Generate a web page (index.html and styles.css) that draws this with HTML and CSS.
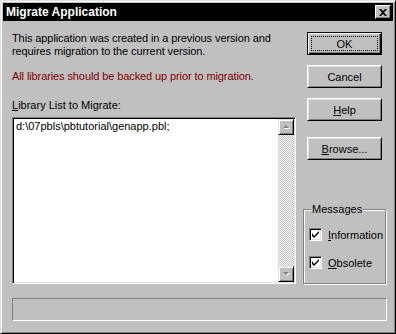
FILE: index.html
```html
<!DOCTYPE html>
<html lang="en">
<head>
  <meta charset="UTF-8">
  <title>Migrate Application</title>
  <link rel="stylesheet" href="styles.css">
</head>
<body>
  <div class="window">
    <div class="titlebar">
      <span class="title">Migrate Application</span>
      <button class="close-btn" aria-label="Close">
        <svg width="8" height="7" viewBox="0 0 8 7"><path d="M0 0h2l2 2 2-2h2L5 3.5 8 7H6L4 5 2 7H0l3-3.5z" fill="#000"/></svg>
      </button>
    </div>

    <div class="main">
      <div class="left">
        <p class="intro">This application was created in a previous version and<br>requires migration to the current version.</p>
        <p class="warning">All libraries should be backed up prior to migration.</p>
        <label class="list-label"><u>L</u>ibrary List to Migrate:</label>
        <div class="listbox">
          <div class="list-items">
            <div class="item">d:\07pbls\pbtutorial\genapp.pbl;</div>
          </div>
          <div class="scrollbar">
            <div class="scroll-btn">
              <svg width="9" height="6" viewBox="0 0 9 6"><path d="M4 1l3 3H1z" fill="#fff" transform="translate(1 1)"/><path d="M4 1l3 3H1z" fill="#808080"/></svg>
            </div>
            <div class="scroll-track"></div>
            <div class="scroll-btn">
              <svg width="9" height="6" viewBox="0 0 9 6"><path d="M1 1h6L4 4z" fill="#fff" transform="translate(1 1)"/><path d="M1 1h6L4 4z" fill="#808080"/></svg>
            </div>
          </div>
        </div>
      </div>

      <div class="right">
        <button class="btn btn-default"><span class="focus">OK</span></button>
        <button class="btn">Cancel</button>
        <button class="btn"><u>H</u>elp</button>
        <button class="btn btn-browse"><u>B</u>rowse...</button>

        <fieldset class="group">
          <legend>Messages</legend>
          <div class="check-row">
            <span class="checkbox"><svg width="7" height="7" viewBox="0 0 7 7"><path d="M0 2v3l2 2 5-5V0L2 5z" fill="#000"/></svg></span>
            <span><u>I</u>nformation</span>
          </div>
          <div class="check-row">
            <span class="checkbox"><svg width="7" height="7" viewBox="0 0 7 7"><path d="M0 2v3l2 2 5-5V0L2 5z" fill="#000"/></svg></span>
            <span><u>O</u>bsolete</span>
          </div>
        </fieldset>
      </div>
    </div>

    <div class="statusbar"></div>
  </div>
</body>
</html>
```

FILE: styles.css
```css
* {
  box-sizing: border-box;
}

body {
  margin: 0;
  background: #c0c0c0;
  font-family: 'Liberation Sans', Arial, sans-serif;
  font-size: 11px;
  color: #000;
}

.window {
  width: 396px;
  height: 334px;
  background: #c0c0c0;
  border: 1px solid;
  border-color: #dfdfdf #000 #000 #dfdfdf;
  box-shadow: inset 1px 1px #fff, inset -1px -1px #808080;
  padding: 2px;
  display: flex;
  flex-direction: column;
}

.titlebar {
  height: 18px;
  background: #000;
  color: #fff;
  display: flex;
  align-items: center;
  justify-content: space-between;
  padding: 0 2px 0 3px;
}

.title {
  font-weight: bold;
  font-size: 12px;
}

.close-btn {
  width: 16px;
  height: 14px;
  padding: 0;
  background: #c0c0c0;
  border: 1px solid;
  border-color: #fff #000 #000 #fff;
  box-shadow: inset -1px -1px #808080;
  display: flex;
  align-items: center;
  justify-content: center;
}

.main {
  display: flex;
  padding: 11px 7px 0 9px;
  height: 263px;
}

.left {
  width: 284px;
  flex-shrink: 0;
  display: flex;
  flex-direction: column;
}

.intro, .warning {
  margin: 0;
  line-height: 13px;
  letter-spacing: -0.1px;
}

.warning {
  color: #800000;
  margin-top: 12px;
}

.list-label {
  margin-top: 16px;
  line-height: 13px;
}

.listbox {
  margin-top: 5px;
  flex: 1;
  display: flex;
  background: #fff;
  border: 1px solid;
  border-color: #808080 #fff #fff #808080;
  box-shadow: inset 1px 1px #000, inset -1px -1px #dfdfdf;
  padding: 1px;
}

.list-items {
  flex: 1;
  padding: 1px 2px;
}

.item {
  line-height: 13px;
}

.scrollbar {
  width: 16px;
  display: flex;
  flex-direction: column;
}

.scroll-btn {
  height: 16px;
  background: #c0c0c0;
  border: 1px solid;
  border-color: #dfdfdf #000 #000 #dfdfdf;
  box-shadow: inset 1px 1px #fff, inset -1px -1px #808080;
  display: flex;
  align-items: center;
  justify-content: center;
}

.scroll-track {
  flex: 1;
  background-color: #fff;
  background-image: conic-gradient(#c0c0c0 25%, #fff 25% 50%, #c0c0c0 50% 75%, #fff 75%);
  background-size: 2px 2px;
}

.right {
  width: 83px;
  min-width: 0;
  flex-shrink: 0;
  margin-left: 7px;
  display: flex;
  flex-direction: column;
  align-items: center;
}

.btn {
  width: 75px;
  height: 23px;
  margin: 0 0 10px;
  padding: 0;
  font-family: inherit;
  font-size: 11px;
  color: #000;
  background: #c0c0c0;
  border: 1px solid;
  border-color: #fff #000 #000 #fff;
  box-shadow: inset 1px 1px #dfdfdf, inset -1px -1px #808080;
}

.btn-default {
  border-color: #000;
  box-shadow: inset 1px 1px #fff, inset -1px -1px #000, inset -2px -2px #808080;
  display: flex;
  padding: 3px;
}

.focus {
  flex: 1;
  border: 1px dotted #000;
  display: flex;
  align-items: center;
  justify-content: center;
}

.btn-browse {
  margin-top: 6px;
}

.group {
  margin: auto 0 0;
  width: 83px;
  min-width: 0;
  height: 81px;
  padding: 13px 2px 0 5px;
  border: 1px solid #808080;
  box-shadow: 1px 1px #fff, inset 1px 1px #fff;
}

.group legend {
  padding: 0 1px;
  margin-left: 2px;
  background: #c0c0c0;
  font-size: 11px;
}

.check-row {
  display: flex;
  align-items: center;
  gap: 6px;
  height: 13px;
  margin-bottom: 15px;
  font-size: 11px;
  white-space: nowrap;
}

.checkbox {
  width: 13px;
  height: 13px;
  flex-shrink: 0;
  background: #fff;
  border: 1px solid;
  border-color: #808080 #fff #fff #808080;
  box-shadow: inset 1px 1px #000, inset -1px -1px #dfdfdf;
  display: flex;
  align-items: center;
  justify-content: center;
}

.statusbar {
  margin: 14px 6px 0 9px;
  height: 23px;
  border: 1px solid;
  border-color: #808080 #fff #fff #808080;
}
```
